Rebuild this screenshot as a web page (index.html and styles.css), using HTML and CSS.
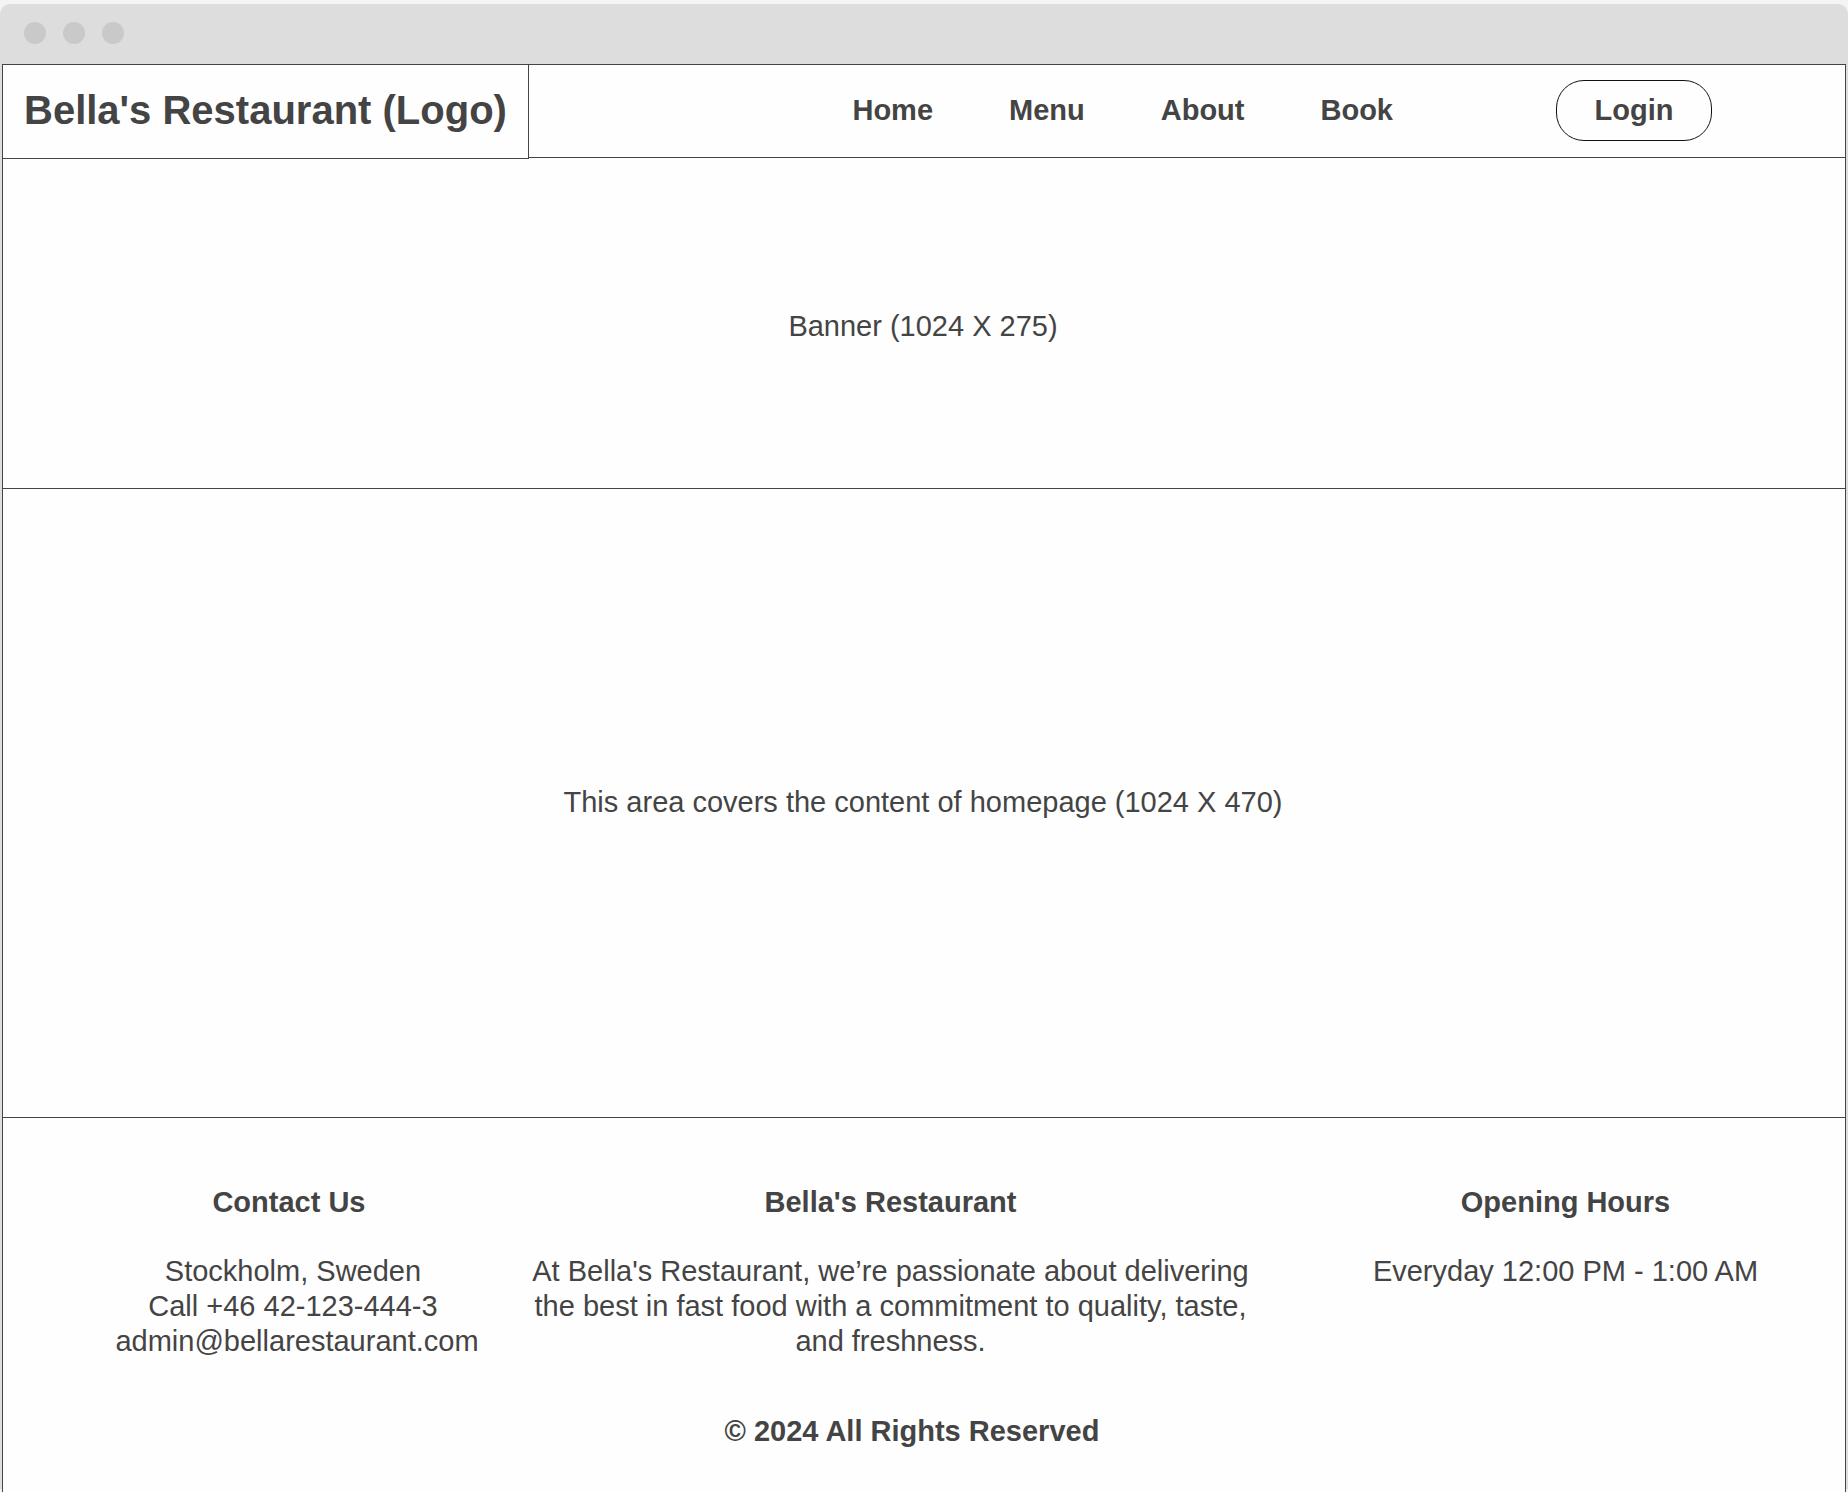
FILE: index.html
```html
<!DOCTYPE html>
<html lang="en">
<head>
  <meta charset="utf-8">
  <meta name="viewport" content="width=device-width, initial-scale=1">
  <title>Bella's Restaurant</title>
  <link rel="stylesheet" href="styles.css">
</head>
<body>
  <div class="window">
    <div class="window-bar">
      <span class="dot"></span>
      <span class="dot"></span>
      <span class="dot"></span>
    </div>
    <div class="page">
      <header class="header">
        <h1 class="logo">Bella's Restaurant (Logo)</h1>
        <nav class="nav">
          <a href="#home">Home</a>
          <a href="#menu">Menu</a>
          <a href="#about">About</a>
          <a href="#book">Book</a>
        </nav>
        <button class="login" type="button">Login</button>
      </header>
      <section class="banner">
        <p>Banner (1024 X 275)</p>
      </section>
      <main class="content">
        <p>This area covers the content of homepage (1024 X 470)</p>
      </main>
      <footer class="footer">
        <div class="footer-columns">
          <section>
            <h2>Contact Us&nbsp;&nbsp;</h2>
            <p>Stockholm, Sweden&nbsp;<br>Call +46 42-123-444-3&nbsp;<br><a href="mailto:admin@bellarestaurant.com">admin@bellarestaurant.com</a></p>
          </section>
          <section>
            <h2>Bella's Restaurant</h2>
            <p>At Bella's Restaurant, we’re passionate about delivering the best in fast food with a commitment to quality, taste, and freshness.</p>
          </section>
          <section class="hours">
            <h2>Opening Hours</h2>
            <p>Everyday 12:00 PM - 1:00 AM</p>
          </section>
        </div>
        <p class="copyright">© 2024 All Rights Reserved&nbsp;&nbsp;&nbsp;</p>
      </footer>
    </div>
  </div>
</body>
</html>
```
FILE: styles.css
```css
* {
  box-sizing: border-box;
}

body {
  margin: 0;
  background: #f4f4f4;
  color: #444;
  font: 29px/35px "Liberation Sans", Arial, sans-serif;
}

h1,
h2,
p {
  margin: 0;
}

a {
  color: inherit;
  text-decoration: none;
}

.window {
  display: flex;
  flex-direction: column;
  min-height: calc(100vh - 7px);
  margin: 4px 0 3px;
  background: #ddd;
  border-radius: 10px 10px 0 0;
}

.window-bar {
  display: flex;
  align-items: center;
  gap: 17px;
  height: 60px;
  padding: 0 24px 2px;
}

.dot {
  width: 22px;
  height: 22px;
  border-radius: 50%;
  background: #c9c9c9;
}

.page {
  flex: 1;
  margin: 0 2px -3px;
  border: 1px solid #444;
  border-bottom: 0;
  background: #fefefe;
}

.header {
  display: flex;
  align-items: center;
  height: 93px;
  padding: 0 133px 1px 0;
  border-bottom: 1px solid #444;
}

.logo {
  align-self: stretch;
  display: flex;
  align-items: center;
  margin-bottom: -3px;
  padding: 0 21px 2px;
  border: solid #444;
  border-width: 0 1px 1px 0;
  background: #fefefe;
  font-size: 40px;
}

.nav {
  display: flex;
  gap: 76px;
  margin-left: auto;
  font-weight: bold;
}

.login {
  width: 156px;
  height: 61px;
  margin-left: 163px;
  padding: 0;
  border: 1px solid #111;
  border-radius: 28px;
  background: #fefefe;
  color: inherit;
  font: inherit;
  font-weight: bold;
}

.banner,
.content {
  display: flex;
  align-items: center;
  justify-content: center;
  padding-right: 2px;
  border-bottom: 1px solid #444;
}

.banner {
  min-height: 331px;
  padding-top: 6px;
}

.content {
  min-height: 629px;
  padding-bottom: 2px;
}

.footer {
  padding: 67px 60px 40px 72px;
  text-align: center;
}

.footer-columns {
  display: grid;
  grid-template-columns: 444fr 743fr 523fr;
}

.footer h2 {
  margin-bottom: 34px;
  font-size: 29px;
}

.hours {
  padding-left: 84px;
}

.copyright {
  margin-top: 55px;
  padding-right: 12px;
  font-weight: bold;
}
```
